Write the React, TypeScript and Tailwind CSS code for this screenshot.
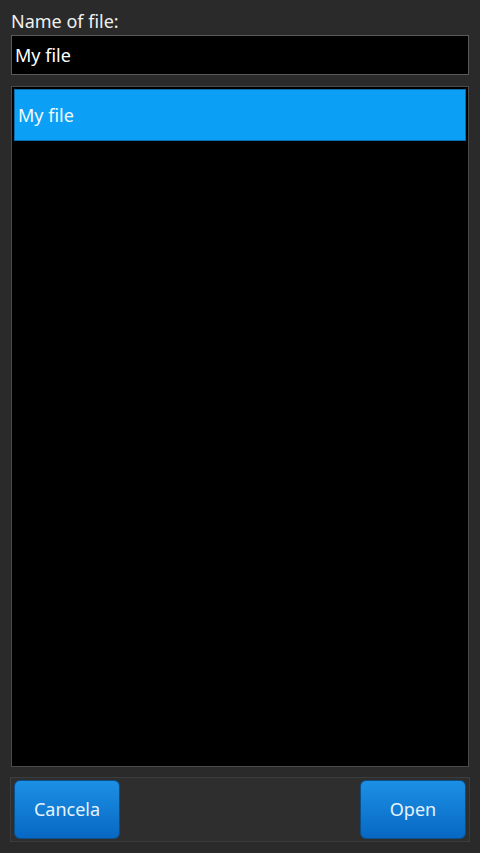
export default function App() {
  return (
    <div
      className="flex h-[853px] w-[480px] flex-col bg-[#2a2a2a] text-white"
      style={{ fontFamily: '"Noto Sans", "Open Sans", sans-serif' }}
    >
      <div className="pl-[11px] pt-[9px] text-[18px] leading-[24px] text-[#f0f0f0]">Name of file:</div>
      <div className="mx-[11px] mt-[2px] flex h-[40px] items-center border border-[#5a5a5a] bg-black pl-[3px] text-[18px] text-white">
        My file
      </div>
      <div className="mx-[11px] mt-[11px] h-[681px] border border-[#4a4a4a] bg-black p-[2px]">
        <div className="flex h-[52px] items-center border border-[#0a6fb0] bg-[#0ba0f5] pl-[3px] text-[18px] text-[#f4faff]">
          My file
        </div>
      </div>
      <div className="mx-[10px] mt-[10px] flex h-[65px] items-center justify-between border border-[#3c3c3c] bg-[#2e2e2e] px-[3px]">
        <button className="h-[59px] w-[106px] rounded-[6px] border border-[#0a4f8a] bg-gradient-to-b from-[#1c90e4] to-[#0868c4] text-[18px] text-[#e6f3ff]">
          Cancela
        </button>
        <button className="h-[59px] w-[106px] rounded-[6px] border border-[#0a4f8a] bg-gradient-to-b from-[#1c90e4] to-[#0868c4] text-[18px] text-[#e6f3ff]">
          Open
        </button>
      </div>
    </div>
  );
}
